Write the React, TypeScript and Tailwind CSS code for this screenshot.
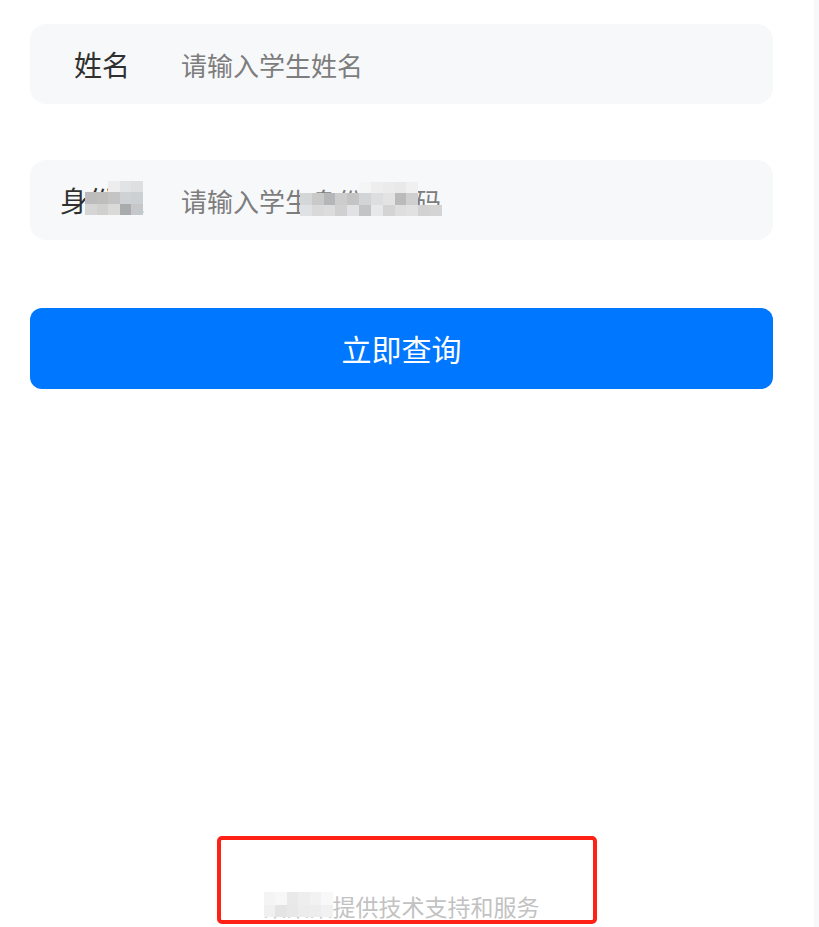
import React from "react";

const FONT = { fontFamily: '"Noto Sans CJK SC", "Noto Sans", sans-serif' };

function Cell({ c }: { c: string }) {
  return <div className={c} />;
}

function LabelMosaic() {
  const cells = [
    "bg-transparent", "bg-transparent", "bg-[#ededee]", "bg-[#e2e3e4]", "bg-[#dddfe0]",
    "bg-[#bcbcbc]", "bg-[#bfbebd]", "bg-[#c4c4c4]", "bg-[#cfd2d4]", "bg-[#cdd0d2]",
    "bg-[#d5d5d5]", "bg-[#d0d0cf]", "bg-[#dadad8]", "bg-[#a9abad]", "bg-[#c5c7c9]",
  ];
  return (
    <div className="absolute left-[55px] top-[21px] grid h-[34px] w-[58px] grid-cols-5 grid-rows-3">
      {cells.map((c, i) => (
        <Cell key={i} c={c} />
      ))}
    </div>
  );
}

function PlaceholderMosaic() {
  const cells = [
    "bg-transparent", "bg-transparent", "bg-transparent", "bg-transparent", "bg-transparent", "bg-[#f5f5f6]",
    "bg-[#eeeeef]", "bg-[#ebebec]", "bg-[#e9e9ea]", "bg-[#f0f0f0]", "bg-transparent", "bg-transparent",
    "bg-[#d4d6d8]", "bg-[#c9c9c9]", "bg-[#b5b6b7]", "bg-[#cdcdcd]", "bg-[#c4c4c4]", "bg-[#d2d4d6]",
    "bg-[#dcdedf]", "bg-[#e3e3e3]", "bg-[#b9babb]", "bg-[#cfcfcf]", "bg-transparent", "bg-transparent",
    "bg-[#e0e1e3]", "bg-[#d9d9d9]", "bg-[#dcdcdc]", "bg-[#d0d0d0]", "bg-[#e0e2e4]", "bg-[#c2c4c5]",
    "bg-[#e7e8ea]", "bg-[#d4d4d4]", "bg-[#dedede]", "bg-[#e1e1e1]", "bg-[#d2d2d2]", "bg-[#d4d4d4]",
  ];
  return (
    <div className="absolute left-[270px] top-[22px] grid h-[34px] w-[142px] grid-cols-12 grid-rows-3">
      {cells.map((c, i) => (
        <Cell key={i} c={c} />
      ))}
    </div>
  );
}

function FooterMosaic() {
  const cells = [
    "bg-[#f4f4f4]", "bg-[#f7f7f7]", "bg-[#e9e9e9]", "bg-[#eeeeee]", "bg-[#f2f2f2]", "bg-[#f8f8f8]",
    "bg-[#f0f0f0]", "bg-[#e4e4e4]", "bg-[#e8e8e8]", "bg-[#ececec]", "bg-[#ededed]", "bg-[#f1f1f1]",
  ];
  return (
    <div className="absolute left-0 top-[1px] grid h-[25px] w-[69px] grid-cols-6 grid-rows-2">
      {cells.map((c, i) => (
        <Cell key={i} c={c} />
      ))}
    </div>
  );
}

function Field({
  label,
  placeholder,
  labelMosaic,
  placeholderMosaic,
}: {
  label: string;
  placeholder: string;
  labelMosaic?: boolean;
  placeholderMosaic?: boolean;
}) {
  return (
    <div className="relative flex h-[80px] items-center rounded-[16px] bg-[#f7f8fa]">
      <span className="w-[144px] shrink-0 text-center text-[28px] leading-none text-[#303030]">{label}</span>
      <input
        className="ml-[7px] min-w-0 flex-1 bg-transparent text-[26px] leading-none text-[#333333] outline-none placeholder:text-[#7d7d7d]"
        placeholder={placeholder}
        style={FONT}
      />
      {labelMosaic && <LabelMosaic />}
      {placeholderMosaic && <PlaceholderMosaic />}
    </div>
  );
}

export default function App() {
  return (
    <div className="relative flex h-[927px] w-[819px] overflow-hidden bg-white" style={FONT}>
      <main className="flex flex-1 flex-col pl-[30px] pr-[41px] pt-[24px]">
        <div className="flex flex-col gap-[56px]">
          <Field label="姓名" placeholder="请输入学生姓名" />
          <Field label="身份证" placeholder="请输入学生身份证号码" labelMosaic placeholderMosaic />
        </div>
        <button className="mt-[68px] flex h-[81px] items-center justify-center rounded-[12px] bg-[#0077ff] text-[30px] text-white">
          立即查询
        </button>
        <div className="flex-1" />
        <footer className="flex justify-center pb-[6px]">
          <p className="relative text-[23px] leading-[30px] text-[#c2c2c2]">
            某某某提供技术支持和服务
            <FooterMosaic />
          </p>
        </footer>
      </main>
      <div className="w-[5px] bg-[#f7f8fa]" />
      <div className="absolute left-[217px] top-[836px] h-[88px] w-[380px] rounded-[5px] border-4 border-[#ff2116]" />
    </div>
  );
}
